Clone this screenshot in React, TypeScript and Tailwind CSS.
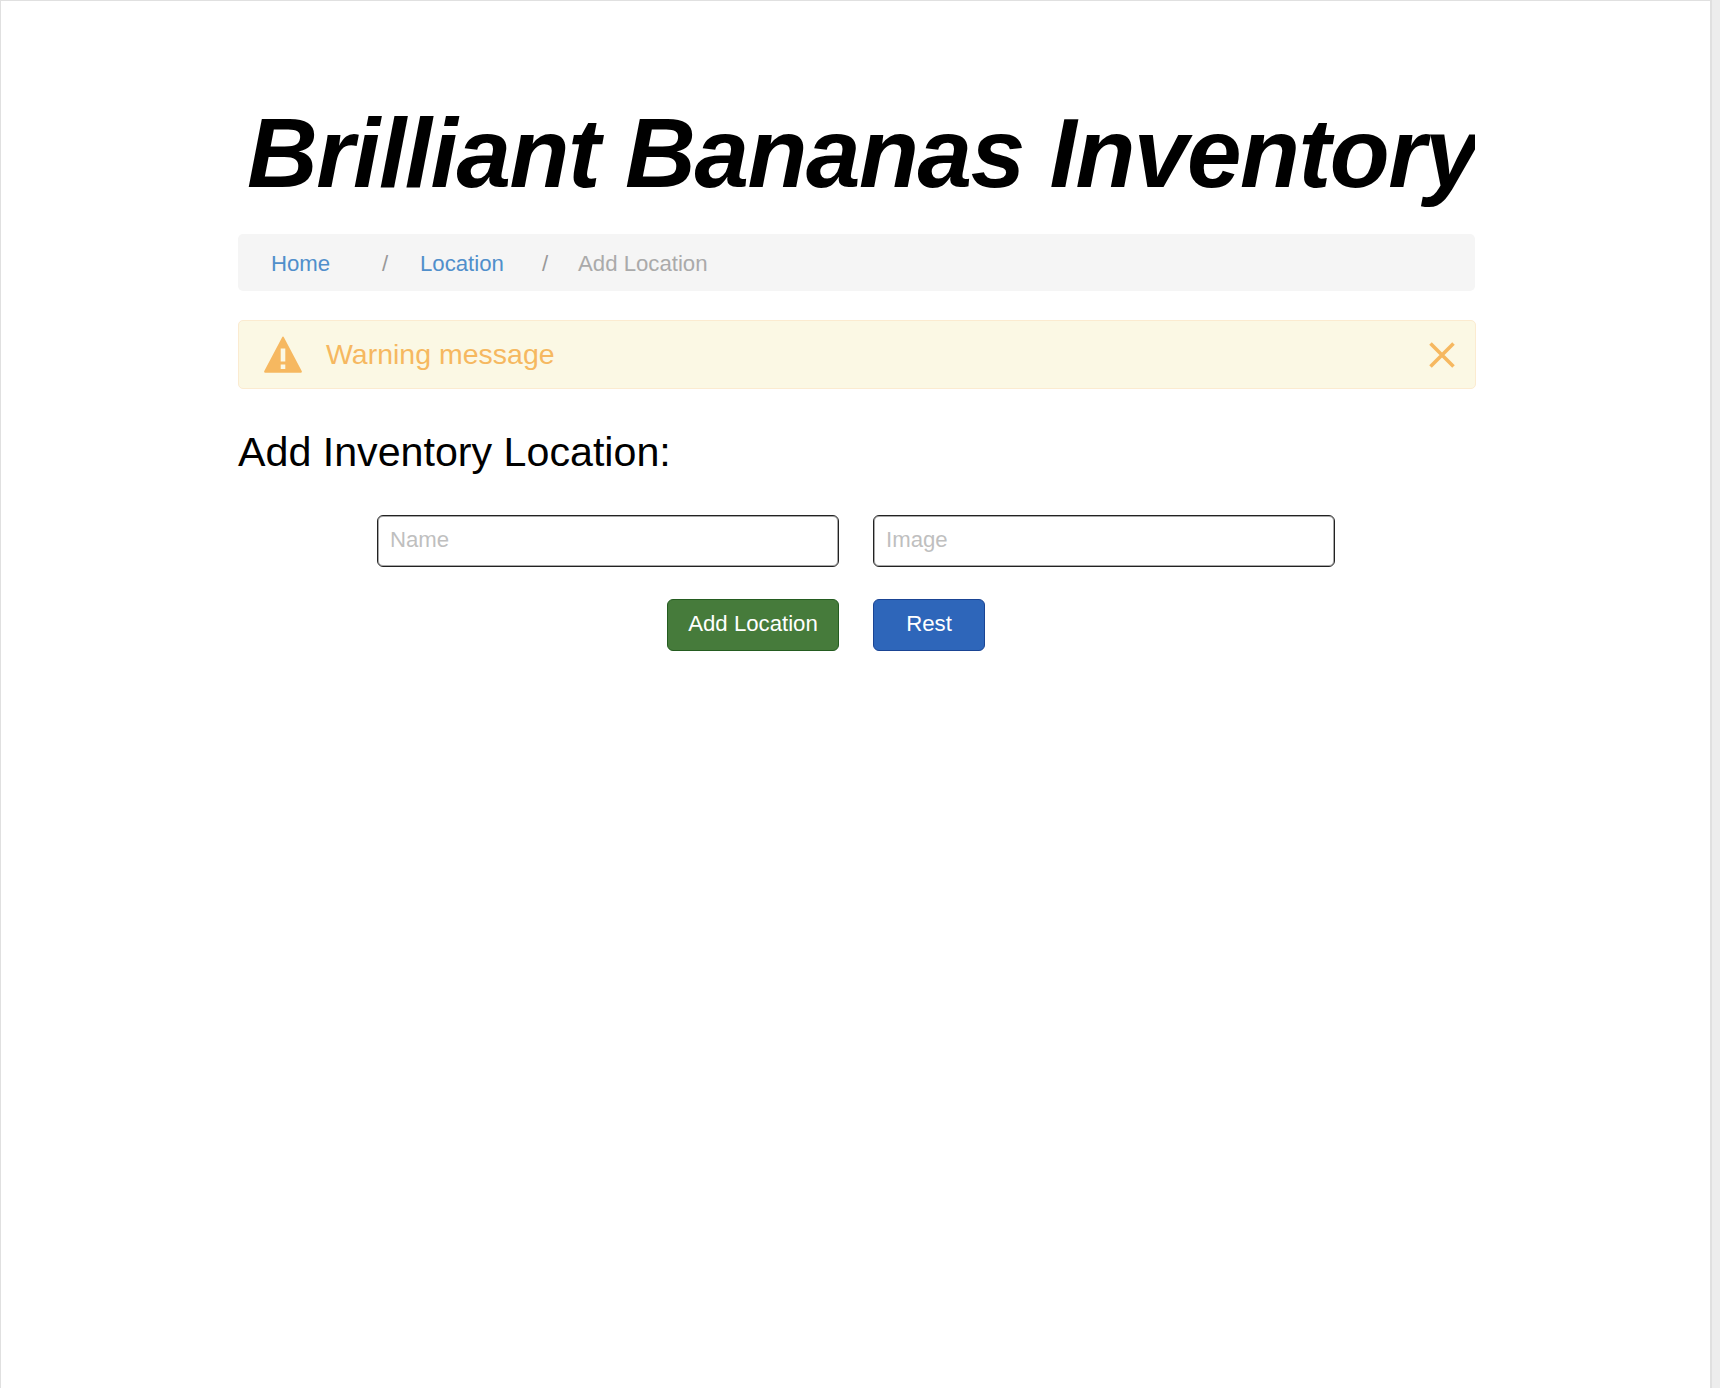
import React from "react";

function Crumb({ className, children }: { className: string; children: React.ReactNode }) {
  return <span className={"whitespace-nowrap " + className}>{children}</span>;
}

function Field({ label }: { label: string }) {
  return (
    <input
      placeholder={label}
      aria-label={label}
      className="h-[52px] w-[462px] rounded-[6px] border border-[#222] bg-white px-[12px] pb-[3px] text-[22.2px] text-black shadow-[inset_0_0_0_1px_#a8a8a8] outline-none placeholder:text-[#bfbfbf] placeholder:opacity-100"
    />
  );
}

export default function App() {
  return (
    <div className="flex h-[1388px] w-[1720px] overflow-hidden bg-[#ededed] font-['Liberation_Sans',Arial,sans-serif]">
      <main className="h-full w-[1712px] border-t border-r-2 border-l border-[#e0e0e0] bg-white pl-[237px]">
        <header className="mt-[87px] h-[146px] w-[1237px] overflow-hidden pl-[9px]">
          <h1 className="text-[98px] leading-[130px] font-bold tracking-[-1.4px] whitespace-nowrap text-black italic">
            Brilliant Bananas Inventory
          </h1>
        </header>
        <nav className="flex h-[57px] w-[1237px] items-center rounded-[5px] bg-[#f5f5f5] pt-[2px] pl-[33px] text-[22.2px]">
          <Crumb className="w-[111px] text-[#508fcb]">Home</Crumb>
          <Crumb className="w-[38px] text-[#999]">/</Crumb>
          <Crumb className="w-[122px] text-[#508fcb]">Location</Crumb>
          <Crumb className="w-[36px] text-[#999]">/</Crumb>
          <Crumb className="text-[#aaa]">Add Location</Crumb>
        </nav>
        <div className="mt-[29px] flex h-[69px] w-[1238px] items-center rounded-[5px] border border-[#fbebd0] bg-[#fbf8e4] pl-[25px] text-[#f6b860]">
          <svg className="mb-[1px] h-[37px] w-[38px]" viewBox="0 0 38 37">
            <path
              fill="currentColor"
              fillRule="evenodd"
              d="M18 1.4q1-1.8 2 0L37.7 35q.7 1.7-1.1 1.7H1.4Q-.4 36.7.3 35ZM16.7 12.5v13h4.6V12.5ZM16.7 28.5v4.5h4.6v-4.5Z"
            />
          </svg>
          <span className="mb-[2px] ml-[24px] flex-1 text-[28.5px] leading-[32px]">Warning message</span>
          <svg className="mr-[20px] h-[26px] w-[26px]" viewBox="0 0 26 26">
            <path d="M1.5 1.5 24.5 24.5M24.5 1.5 1.5 24.5" stroke="currentColor" strokeWidth="3.6" />
          </svg>
        </div>
        <h2 className="mt-[39px] text-[41.2px] leading-[48px] whitespace-nowrap text-black">Add Inventory Location:</h2>
        <form className="mt-[39px] grid w-[958px] grid-cols-[462px_462px] gap-x-[34px] gap-y-[32px] pl-[139px]">
          <Field label="Name" />
          <Field label="Image" />
          <button
            type="button"
            className="h-[52px] w-[172px] justify-self-end rounded-[6px] border border-[#245c20] bg-[#467b3b] pb-[2px] text-[22.2px] whitespace-nowrap text-white"
          >
            Add Location
          </button>
          <button
            type="button"
            className="h-[52px] w-[112px] rounded-[6px] border border-[#1a4494] bg-[#2e66ba] pb-[2px] text-[22.2px] text-white"
          >
            Rest
          </button>
        </form>
      </main>
    </div>
  );
}
